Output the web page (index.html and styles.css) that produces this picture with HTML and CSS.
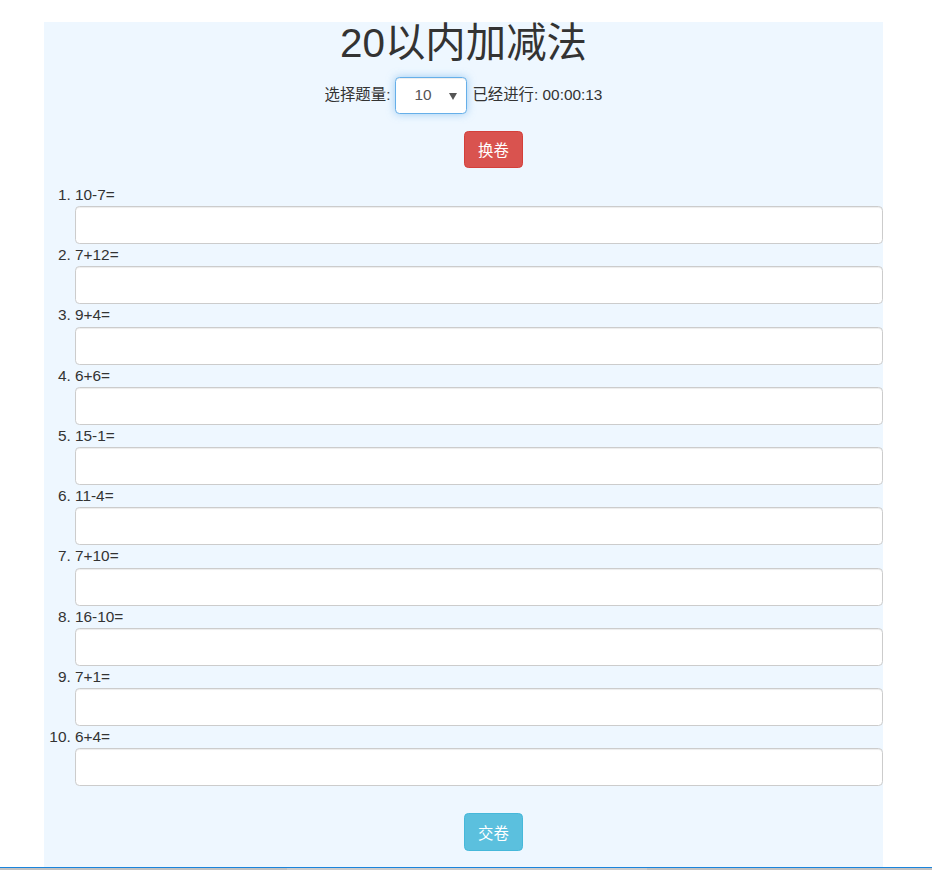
FILE: index.html
```html
<!DOCTYPE html>
<html lang="zh">
<head>
<meta charset="utf-8">
<title>20以内加减法</title>
<link rel="stylesheet" href="styles.css">
</head>
<body>
<div class="container">
  <h1 class="title">20以内加减法</h1>
  <div class="controls">
    <span>选择题量:</span>
    <div class="select"><span class="select-value">10</span><span class="select-arrow"></span></div>
    <span>已经进行: 00:00:13</span>
  </div>
  <div class="center change-row"><button class="btn btn-danger">换卷</button></div>
  <ol class="questions">
    <li><label>10-7=</label><input class="form-control" type="text"></li>
    <li><label>7+12=</label><input class="form-control" type="text"></li>
    <li><label>9+4=</label><input class="form-control" type="text"></li>
    <li><label>6+6=</label><input class="form-control" type="text"></li>
    <li><label>15-1=</label><input class="form-control" type="text"></li>
    <li><label>11-4=</label><input class="form-control" type="text"></li>
    <li><label>7+10=</label><input class="form-control" type="text"></li>
    <li><label>16-10=</label><input class="form-control" type="text"></li>
    <li><label>7+1=</label><input class="form-control" type="text"></li>
    <li><label>6+4=</label><input class="form-control" type="text"></li>
  </ol>
  <div class="center submit-row"><button class="btn btn-info">交卷</button></div>
</div>
<div class="hscroll"><div class="hscroll-thumb"></div></div>
</body>
</html>
```
FILE: styles.css
```css
html, body {
  margin: 0;
  padding: 0;
}
body {
  background: #fff;
  color: #333;
  font-family: "Liberation Sans", "Noto Sans CJK SC", sans-serif;
  font-size: 15.4px;
  line-height: 22px;
}
.container {
  margin: 22px 0 0 44px;
  width: 839px;
  min-height: 860px;
  background: #eef7ff;
}
.title {
  margin: 4px 0 0;
  font-size: 40.4px;
  font-weight: 400;
  line-height: 43.6px;
  text-align: center;
  color: #333;
}
.controls {
  display: flex;
  justify-content: center;
  align-items: center;
  gap: 5px;
  margin-top: 11px;
}
.select {
  position: relative;
  box-sizing: border-box;
  width: 72px;
  height: 37px;
  border: 1px solid #66afe9;
  border-radius: 4.4px;
  background: #fff;
  box-shadow: inset 0 1px 1px rgba(0,0,0,.075), 0 0 8px rgba(102,175,233,.6);
  display: flex;
  align-items: center;
  padding-left: 18px;
  color: #555;
}
.select-arrow {
  position: absolute;
  right: 9px;
  top: 15px;
  width: 0;
  height: 0;
  border-left: 4px solid transparent;
  border-right: 4px solid transparent;
  border-top: 7px solid #555;
}
.center {
  display: flex;
  justify-content: center;
  padding-left: 60px;
}
.change-row {
  margin-top: 17px;
}
.btn {
  box-sizing: border-box;
  height: 37.4px;
  padding: 0 13.2px;
  border: 1px solid transparent;
  border-radius: 4.4px;
  font-family: inherit;
  font-size: 15.4px;
  color: #fff;
  cursor: pointer;
}
.btn-danger {
  background: #d9534f;
  border-color: #d43f3a;
}
.btn-info {
  background: #5bc0de;
  border-color: #46b8da;
}
.questions {
  margin: 16px 0 0;
  padding-left: 31px;
}
.questions li {
  line-height: 22.25px;
}
.questions label {
  display: block;
}
.form-control {
  display: block;
  box-sizing: border-box;
  width: 100%;
  height: 38px;
  margin: 0;
  border: 1px solid #ccc;
  border-radius: 4.4px;
  background: #fff;
  box-shadow: inset 0 1px 1px rgba(0,0,0,.075);
  font-size: 15.4px;
  padding: 6px 13px;
}
.submit-row {
  margin-top: 27px;
}
.hscroll {
  position: fixed;
  left: 0;
  right: 0;
  bottom: 0;
  height: 2px;
  border-top: 1px solid #1a84dc;
  background: #c2c2c2;
}
.hscroll-thumb {
  margin-left: 287px;
  width: 360px;
  height: 2px;
  background: #cdcdcd;
}
```
